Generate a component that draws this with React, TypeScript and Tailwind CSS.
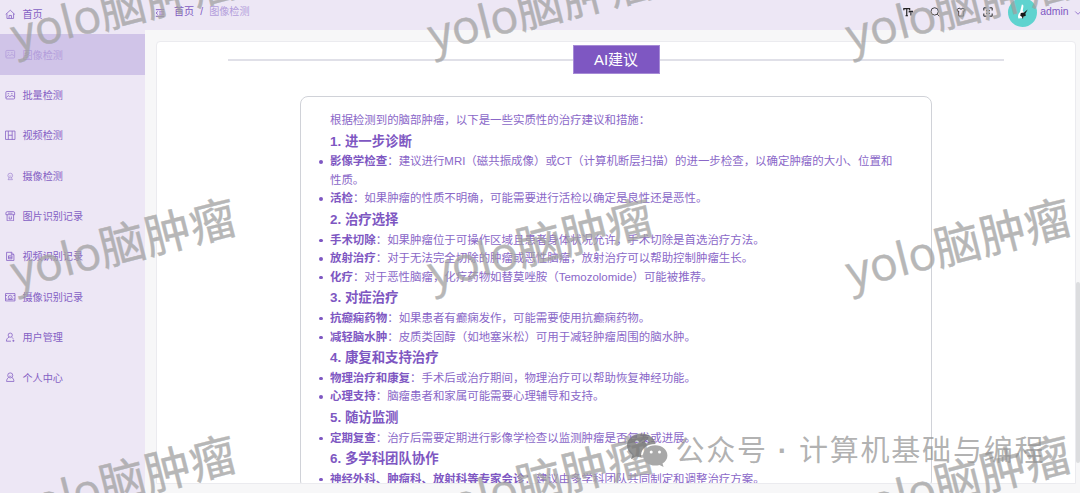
import type { ReactNode } from 'react'
import { ChevronDown } from 'lucide-react'

interface MenuItem {
  label: string
  icon: ReactNode
  active?: boolean
}

interface AdvicePoint {
  name: string
  text: string
}

interface AdviceSection {
  title: string
  points: AdvicePoint[]
}

const MENU: MenuItem[] = [
  { label: '首页', icon: <path d="M.8 6.2 6 1.4l5.2 4.8M2.2 5.2v5.6h7.6V5.2M4.6 10.6V7.4h2.8v3.2" /> },
  { label: '图像检测', icon: <PictureShape />, active: true },
  { label: '批量检测', icon: <PictureShape /> },
  { label: '视频检测', icon: <path d="M.6 1.2h10.8v9.6H.6zM3.8 1.2v9.6M8.2 1.2v9.6M3.8 6h4.4" /> },
  { label: '摄像检测', icon: <path opacity=".65" d="M6 2.5a2.7 2.7 0 1 1 0 5.4 2.7 2.7 0 0 1 0-5.4zM4.8 5.4c.6.6 1.8.6 2.4 0M4.7 7.8l-1.2 2.1h5L7.3 7.8" /> },
  { label: '图片识别记录', icon: <path d="M1 4.2V2.4C1 1.4 1.6.8 2.6.8h6.8c1 0 1.6.6 1.6 1.6v1.8H1zM2.4 4.2v7h7.4v-7M3.5 2.5h5M4.8 6.2v3M7.3 6.2v3M4.8 9.2h2.5" /> },
  { label: '视频识别记录', icon: <path d="M1.8 1.5h5.7L10.2 4v6.8H1.8zM7.3 1.5v2.7h2.9M4 5.5h4v3.4H4zM4 7.2h4" /> },
  { label: '摄像识别记录', icon: <path d="M.6 1.8h10.8v8.4H.6zM.6 4h1.8M9.6 4h1.8M.6 8h1.8M9.6 8h1.8M6 3.8a2.2 2.2 0 1 1 0 4.4 2.2 2.2 0 0 1 0-4.4zM6 5.6v.8M3 8.5h6" /> },
  { label: '用户管理', icon: <path d="M6 1.2a2.4 2.4 0 1 1 0 4.8 2.4 2.4 0 0 1 0-4.8zM4.6 5.8C2.7 6.7 1.6 8.4 1.6 10.5h5.2M7.6 6c.8.4 1.3.9 1.8 1.6M8.4 10h2.4M9.6 8.8v2.4" /> },
  { label: '个人中心', icon: <path d="M6 1a2.9 2.9 0 1 1 0 5.8A2.9 2.9 0 0 1 6 1zM4 6.2C2.7 7.2 1.8 8.8 1.8 10.8h8.4c0-2-.9-3.6-2.2-4.6M4.7 4.4c.7.8 1.9.8 2.6 0" /> },
]

const SECTIONS: AdviceSection[] = [
  {
    title: '1. 进一步诊断',
    points: [
      { name: '影像学检查', text: '建议进行MRI（磁共振成像）或CT（计算机断层扫描）的进一步检查，以确定肿瘤的大小、位置和性质。' },
      { name: '活检', text: '如果肿瘤的性质不明确，可能需要进行活检以确定是良性还是恶性。' },
    ],
  },
  {
    title: '2. 治疗选择',
    points: [
      { name: '手术切除', text: '如果肿瘤位于可操作区域且患者身体状况允许，手术切除是首选治疗方法。' },
      { name: '放射治疗', text: '对于无法完全切除的肿瘤或恶性脑瘤，放射治疗可以帮助控制肿瘤生长。' },
      { name: '化疗', text: '对于恶性脑瘤，化疗药物如替莫唑胺（Temozolomide）可能被推荐。' },
    ],
  },
  {
    title: '3. 对症治疗',
    points: [
      { name: '抗癫痫药物', text: '如果患者有癫痫发作，可能需要使用抗癫痫药物。' },
      { name: '减轻脑水肿', text: '皮质类固醇（如地塞米松）可用于减轻肿瘤周围的脑水肿。' },
    ],
  },
  {
    title: '4. 康复和支持治疗',
    points: [
      { name: '物理治疗和康复', text: '手术后或治疗期间，物理治疗可以帮助恢复神经功能。' },
      { name: '心理支持', text: '脑瘤患者和家属可能需要心理辅导和支持。' },
    ],
  },
  {
    title: '5. 随访监测',
    points: [{ name: '定期复查', text: '治疗后需要定期进行影像学检查以监测肿瘤是否复发或进展。' }],
  },
  {
    title: '6. 多学科团队协作',
    points: [{ name: '神经外科、肿瘤科、放射科等专家会诊', text: '建议由多学科团队共同制定和调整治疗方案。' }],
  },
]

function PictureShape() {
  return <path d="M2 1.7h8q1 0 1 1v6.6q0 1-1 1H2q-1 0-1-1V2.7q0-1 1-1zM1.4 8.8l2.3-2.4 1.8 1.2 2.4-1.4 2.8 1.6M3 4.2h1.8M7 4.2h1.6" />
}

function Sidebar() {
  return (
    <aside className="w-[145px] shrink-0 bg-[#ede7f5]">
      <nav className="-mt-[6px]">
        {MENU.map((item) => (
          <a
            key={item.label}
            className={`flex h-[40.4px] items-center gap-[7px] pl-[5px] text-[10.1px] ${
              item.active ? 'bg-[#d0c4e8] text-[#b39ddb]' : 'text-[#8460c4]'
            }`}
          >
            <svg viewBox="0 0 12 12" className="size-[10.5px] shrink-0" fill="none" stroke="currentColor" strokeWidth="0.9">
              {item.icon}
            </svg>
            <span className="pt-[1px]">{item.label}</span>
          </a>
        ))}
      </nav>
    </aside>
  )
}

function Header() {
  return (
    <header className="flex h-[30px] shrink-0 items-center bg-[#ede7f5] pl-2.5 text-[10.1px] text-[#7e57c2]">
      <svg viewBox="0 0 12 12" className="-mt-[5px] size-[10px]" fill="none" stroke="currentColor" strokeWidth="1.1">
        <path d="M1 2h10M5 4.7h6M5 7.3h6M1 10h10M3.3 4.2 1.3 6l2 1.8" />
      </svg>
      <div className="-mt-[6px] ml-[9px] flex">
        <span>首页</span>
        <span className="w-[15px] text-center">/</span>
        <span className="text-[#b39ddb]">图像检测</span>
      </div>
      <div className="-mt-[6px] ml-auto flex items-center text-[#222]">
        <svg viewBox="0 0 12 12" className="mr-[17px] size-[10px]" fill="none" stroke="currentColor" strokeWidth="1.4">
          <path d="M1 4V2h7v2M4.5 2v8.5M3 10.5h3M7.5 6.5V5.3h4v1.2M9.5 5.3v5" />
        </svg>
        <svg viewBox="0 0 12 12" className="mr-[16.5px] size-[10px]" fill="none" stroke="currentColor">
          <circle cx="5.6" cy="5.3" r="4.4" />
          <path d="m8.8 8.6 2.5 2.6" />
        </svg>
        <svg viewBox="0 0 12 12" className="mr-[16.5px] size-[10px]" fill="none" stroke="currentColor">
          <path d="M4 1.2C4.3 3 7.7 3 8 1.2l3 1.9-1.2 2.3-1-.5v6H3.2v-6l-1 .5L1 3.1z" />
        </svg>
        <svg viewBox="0 0 12 12" className="mr-[15px] size-[10px]" fill="none" stroke="currentColor" strokeWidth="1.2">
          <path d="M1 4.2V1h3.2M7.8 1H11v3.2M11 7.8V11H7.8M4.2 11H1V7.8M4.2 5V4.2H5M7 4.2h.8V5M7.8 7v.8H7M5 7.8h-.8V7" />
        </svg>
      </div>
      <svg viewBox="0 0 28 28" className="-mt-[6px] size-[29px]">
        <circle cx="14" cy="14" r="14" fill="#5fd3cf" />
        <path d="M13.4 6.2c1.5 0 1.6 1.2 1.4 2.6l-.6 3.6 2 2.6-1.6 4.2-4.6.7c-.9-2.7.2-5 1.6-6.4z" fill="#fff" />
        <path d="M12.4 14.4l3.1-.4 3.5-2.8-2.2 3.7.4 2.2-2.2.8-.6 2.3-1.2-2.4-1.4-.6z" fill="#171717" />
      </svg>
      <span className="-mt-[6px] ml-[3.5px] font-['Liberation_Sans',sans-serif] text-[10.4px]">admin</span>
      <ChevronDown className="-mt-[5px] mr-[-2.5px] ml-[4px] size-[10px] shrink-0" strokeWidth={1.8} />
    </header>
  )
}

function Advice() {
  return (
    <article className="mx-auto mt-[22px] w-[632px] rounded-lg border border-[#d0d2d8] pt-[14px] pr-[28px] pl-[29px] text-[11.45px] leading-[18.6px] text-[#8a67c8]">
      <p>根据检测到的脑部肿瘤，以下是一些实质性的治疗建议和措施：</p>
      {SECTIONS.map((section) => (
        <section key={section.title}>
          <h3 className="pt-[1px] text-[13.4px] leading-[21.6px] font-bold text-[#7e57c2]">{section.title}</h3>
          <ul>
            {section.points.map((point) => (
              <li key={point.name} className="relative">
                <span className="absolute top-[8px] -left-[11px] size-[3.5px] rounded-full bg-[#7e57c2]" />
                <strong className="font-bold text-[#7e57c2]">{point.name}</strong>：{point.text}
              </li>
            ))}
          </ul>
        </section>
      ))}
    </article>
  )
}

// Tiled page watermark, one tile per 417x237 block.
function Watermark() {
  return (
    <div className="pointer-events-none absolute top-[-112px] left-[-86px] grid auto-rows-[237px] grid-cols-[repeat(3,417.5px)] opacity-75">
      {Array.from({ length: 9 }, (_, i) => (
        <div key={i} className="flex items-center justify-center">
          <span className="-rotate-[14.3deg] font-['Open_Sans','Noto_Sans_CJK_SC',sans-serif] text-[46.5px] leading-none whitespace-nowrap text-[#a0a0a0] [-webkit-text-stroke:0.4px_#a0a0a0]">
            yolo脑肿瘤
          </span>
        </div>
      ))}
    </div>
  )
}

function AccountMark() {
  return (
    <div className="pointer-events-none absolute top-[430px] left-[626px] flex items-center text-[#909090]/70">
      <svg viewBox="0 0 42 36" className="h-[36px] w-[42px]">
        <path
          fill="#777"
          fillOpacity=".8"
          fillRule="evenodd"
          d="M15.5 1.5C7.5 1.5 1 6.8 1 13.5c0 3.9 2 7.2 5.4 9.4L5 27.2l5-2.6c1.7.5 3.5.8 5.3.8C14 18 19.5 12 29.6 12 28.4 6 22.5 1.5 15.5 1.5zM10.8 8a1.8 1.8 0 1 1 0 3.6 1.8 1.8 0 0 1 0-3.6zm9.8 0a1.8 1.8 0 1 1 0 3.6 1.8 1.8 0 0 1 0-3.6z"
        />
        <path
          fill="#a8a8a8"
          fillRule="evenodd"
          d="M29.3 13.2c-7 0-12.3 4.5-12.3 10.2s5.3 10.1 12.3 10.1c1.5 0 3-.2 4.2-.6l4.1 2.2-1.1-3.6c3.1-1.9 4.9-4.8 4.9-8.1 0-5.7-5.2-10.2-12.1-10.2zm-4.1 5.4a1.5 1.5 0 1 1 0 3 1.5 1.5 0 0 1 0-3zm8.3 0a1.5 1.5 0 1 1 0 3 1.5 1.5 0 0 1 0-3z"
        />
      </svg>
      <span className="mt-[2px] ml-[7.5px] flex text-[29px] leading-[38px] tracking-[1.8px] whitespace-nowrap">
        <span>公众号</span>
        <span className="w-[31px] text-center font-bold">·</span>
        <span>计算机基础与编程</span>
      </span>
    </div>
  )
}

export default function App() {
  return (
    <div
      lang="zh-CN"
      className="relative flex h-[493px] w-[1080px] overflow-hidden bg-[#f7f7f8] font-['Liberation_Sans','Noto_Sans_CJK_SC',sans-serif]"
    >
      <Sidebar />
      <div className="flex min-w-0 flex-1 flex-col">
        <Header />
        <main className="mt-[11px] flex h-[443px] pl-[11px]">
          <div className="min-w-0 flex-1 overflow-hidden rounded-t-sm border border-[#ebebef] bg-white">
            <div className="mx-auto mt-[3px] flex w-[776px] items-center">
              <span className="h-[2px] flex-1 bg-[#e0e0e8]" />
              <h2 className="h-[29px] w-[87px] border border-[#a68bd6] bg-[#7e57c2] text-center text-[15px] leading-[28px] text-white">
                AI建议
              </h2>
              <span className="h-[2px] flex-1 bg-[#e0e0e8]" />
            </div>
            <Advice />
          </div>
          <div className="w-[4px] shrink-0 pt-[241px]">
            <div className="h-[181px] rounded-sm bg-[#dcdddf]" />
          </div>
        </main>
      </div>
      <Watermark />
      <AccountMark />
    </div>
  )
}
